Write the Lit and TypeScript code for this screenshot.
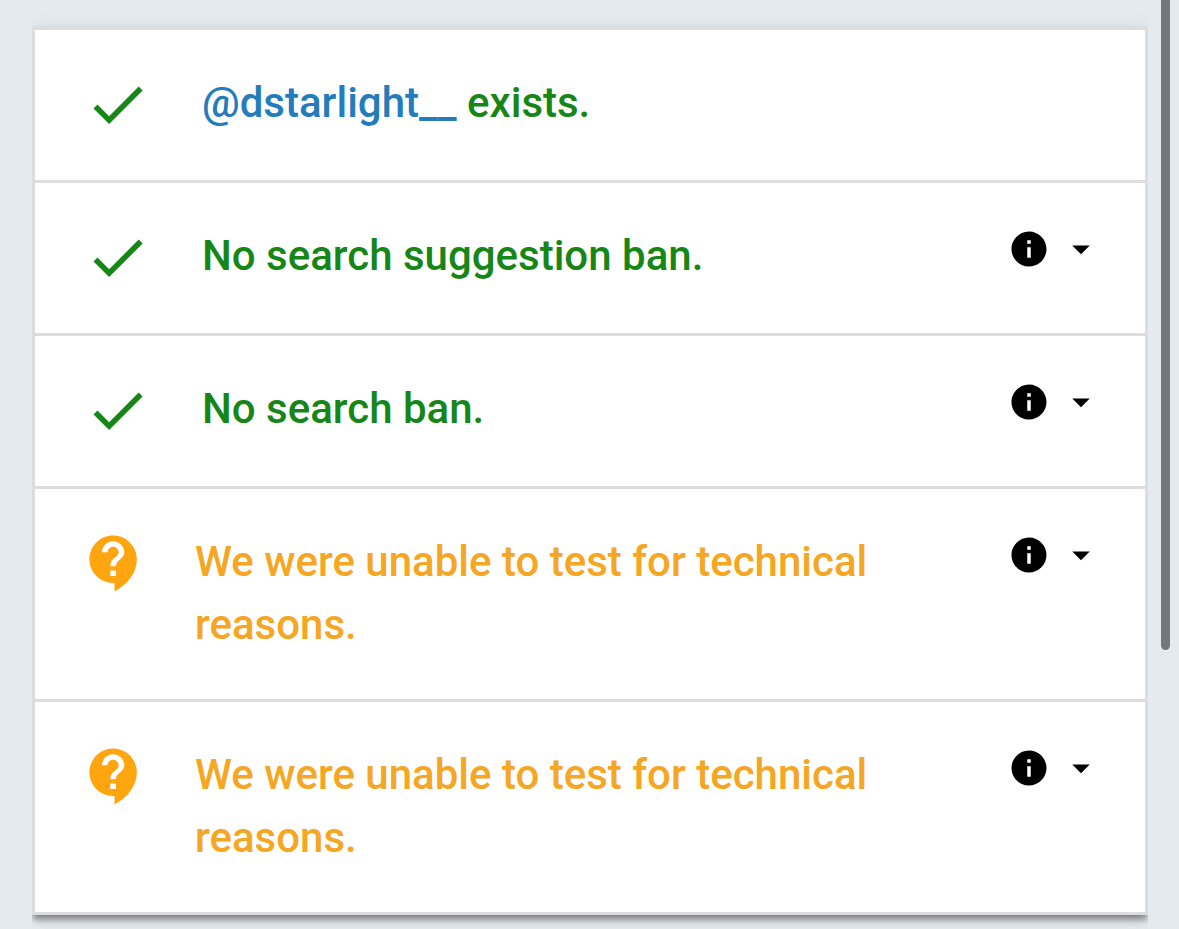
import { LitElement, html, css, nothing } from "lit";
import { customElement, property } from "lit/decorators.js";

type Status = "ok" | "unknown";

interface Check {
  status: Status;
  text: string;
  handle?: string;
  details: boolean;
}

const CHECKS: Check[] = [
  { status: "ok", handle: "dstarlight__", text: "exists.", details: false },
  { status: "ok", text: "No search suggestion ban.", details: true },
  { status: "ok", text: "No search ban.", details: true },
  { status: "unknown", text: "We were unable to test for technical reasons.", details: true },
  { status: "unknown", text: "We were unable to test for technical reasons.", details: true },
];

const ICONS = {
  ok: "M9 16.17L4.83 12l-1.42 1.41L9 19 21 7l-1.41-1.41z",
  unknown:
    "M11.5 2C6.81 2 3 5.81 3 10.5S6.81 19 11.5 19h.5v3c4.86-2.34 8-7 8-11.5C20 5.81 16.19 2 11.5 2zm1 14.5h-2v-2h2v2zm0-3.5h-2c0-3.25 3-3 3-5 0-1.1-.9-2-2-2s-2 .9-2 2h-2c0-2.21 1.79-4 4-4s4 1.79 4 4c0 2.5-3 2.75-3 5z",
  info: "M12 2C6.48 2 2 6.48 2 12s4.48 10 10 10 10-4.48 10-10S17.52 2 12 2zm1 15h-2v-6h2v6zm0-8h-2V7h2v2z",
  arrow: "M7 10l5 5 5-5z",
};

const icon = (name: keyof typeof ICONS) => html`
  <svg viewBox="0 0 24 24" fill="currentColor" aria-hidden="true"><path d=${ICONS[name]}></path></svg>
`;

@customElement("check-row")
export class CheckRow extends LitElement {
  @property({ attribute: false }) check!: Check;

  static styles = css`
    :host {
      display: block;
    }
    .row {
      display: flex;
      align-items: flex-start;
      padding: 41px 43px 43px 34px;
    }
    .ok {
      color: #168616;
    }
    .unknown {
      color: #f5a623;
    }
    .status {
      flex: none;
      display: flex;
      justify-content: center;
      height: 66px;
    }
    .ok .status {
      width: 97px;
    }
    .unknown .status {
      width: 91px;
      height: 63px;
      color: #ffa50f;
    }
    .status svg {
      flex: none;
      width: 67px;
      height: 67px;
    }
    .message {
      flex: 1;
      min-width: 0;
      margin: 0 35px;
      font-size: 42px;
      line-height: 63px;
      font-weight: 500;
    }
    .ok .message {
      margin-left: 36px;
    }
    a {
      color: #237dba;
      text-decoration: none;
    }
    button {
      flex: none;
      display: flex;
      gap: 10px;
      margin: 4px 0 0;
      padding: 0;
      border: 0;
      background: none;
      color: #000;
      cursor: pointer;
    }
    button svg {
      width: 42px;
      height: 42px;
    }
  `;

  render() {
    const { status, text, handle, details } = this.check;
    return html`
      <div class="row ${status}">
        <span class="status">${icon(status)}</span>
        <p class="message">${handle ? html`<a href="#${handle}">@${handle}</a> ` : nothing}${text}</p>
        ${details
          ? html`<button type="button" aria-label="Details">${icon("info")}${icon("arrow")}</button>`
          : nothing}
      </div>
    `;
  }
}

@customElement("app-root")
export class AppRoot extends LitElement {
  static styles = css`
    :host {
      display: block;
      box-sizing: border-box;
      min-height: 100vh;
      padding: 27px 31px 14px 32px;
      background: #e5eaee;
      font-family: Roboto, sans-serif;
    }
    .card {
      margin: 0;
      padding: 0;
      list-style: none;
      background: #fff;
      border: 3px solid #dddddf;
      box-shadow:
        0 5px 7px -1px rgba(0, 0, 0, 0.45),
        0 3px 18px 0 rgba(0, 0, 0, 0.1);
      /* the shadow only falls above and below the card */
      clip-path: inset(-27px 0 -27px 0);
    }
    .item + .item {
      border-top: 3px solid #dddddf;
    }
    .thumb {
      position: fixed;
      top: 0;
      right: 9px;
      width: 9px;
      height: 70vh;
      border-radius: 0 0 5px 5px;
      background: #73787b;
    }
  `;

  render() {
    return html`
      <ul class="card">
        ${CHECKS.map((check) => html`<li class="item"><check-row .check=${check}></check-row></li>`)}
      </ul>
      <div class="thumb" aria-hidden="true"></div>
    `;
  }
}
